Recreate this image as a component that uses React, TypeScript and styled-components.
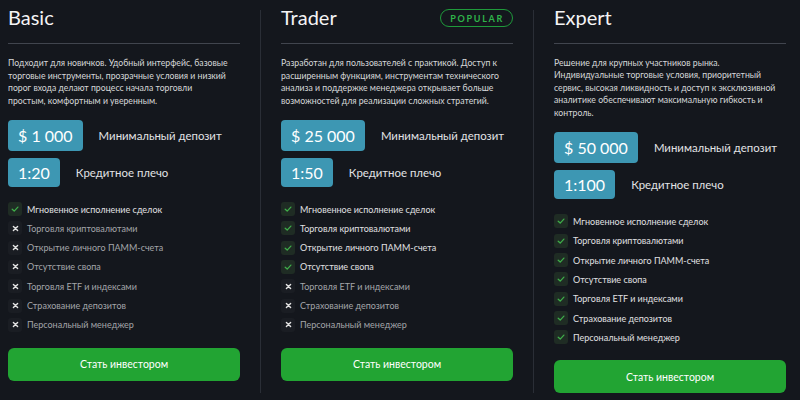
import styled, { createGlobalStyle } from "styled-components";

type Plan = {
  name: string;
  popular?: boolean;
  text: string;
  deposit: string;
  leverage: string;
  included: number;
};

const FEATURES = [
  "Мгновенное исполнение сделок",
  "Торговля криптовалютами",
  "Открытие личного ПАММ-счета",
  "Отсутствие свопа",
  "Торговля ETF и индексами",
  "Страхование депозитов",
  "Персональный менеджер",
];

const PLANS: Plan[] = [
  {
    name: "Basic",
    text: "Подходит для новичков. Удобный интерфейс, базовые торговые инструменты, прозрачные условия и низкий порог входа делают процесс начала торговли\nпростым, комфортным и уверенным.",
    deposit: "$ 1 000",
    leverage: "1:20",
    included: 1,
  },
  {
    name: "Trader",
    popular: true,
    text: "Разработан для пользователей с практикой. Доступ к расширенным функциям, инструментам технического анализа и поддержке менеджера открывает больше возможностей для реализации сложных стратегий.",
    deposit: "$ 25 000",
    leverage: "1:50",
    included: 4,
  },
  {
    name: "Expert",
    text: "Решение для крупных участников рынка. Индивидуальные торговые условия, приоритетный сервис, высокая ликвидность и доступ к эксклюзивной аналитике обеспечивают максимальную гибкость и контроль.",
    deposit: "$ 50 000",
    leverage: "1:100",
    included: 7,
  },
];

const CheckIcon = () => (
  <svg width="8" height="8" viewBox="0 0 10 10" fill="none">
    <path d="M1.5 5.3 L4 7.6 L8.6 2.6" stroke="#3fae4a" strokeWidth="1.6" strokeLinecap="round" strokeLinejoin="round" />
  </svg>
);

const CrossIcon = () => (
  <svg width="7" height="7" viewBox="0 0 10 10" fill="none">
    <path d="M2 2 L8 8 M8 2 L2 8" stroke="#e4e4e4" strokeWidth="2" strokeLinecap="round" />
  </svg>
);

const PlanCard = ({ plan }: { plan: Plan }) => (
  <Column>
    <Header>
      <Title>{plan.name}</Title>
      {plan.popular && <Popular>POPULAR</Popular>}
    </Header>
    <Rule />
    <Description>{plan.text}</Description>
    <Terms>
      <TermRow>
        <Pill $tall>{plan.deposit}</Pill>
        <TermLabel>Минимальный депозит</TermLabel>
      </TermRow>
      <TermRow>
        <Pill>{plan.leverage}</Pill>
        <TermLabel>Кредитное плечо</TermLabel>
      </TermRow>
    </Terms>
    <Features>
      {FEATURES.map((f, i) => {
        const on = i < plan.included;
        return (
          <Feature key={f} $on={on}>
            <Mark $on={on}>{on ? <CheckIcon /> : <CrossIcon />}</Mark>
            {f}
          </Feature>
        );
      })}
    </Features>
    <InvestButton>Стать инвестором</InvestButton>
  </Column>
);

export default function App() {
  return (
    <>
      <GlobalStyle />
      <Page>
        <PlanCard plan={PLANS[0]} />
        <Divider />
        <PlanCard plan={PLANS[1]} />
        <Divider />
        <PlanCard plan={PLANS[2]} />
      </Page>
    </>
  );
}

const GlobalStyle = createGlobalStyle`
  html, body {
    margin: 0;
    background: #14171d;
  }
  body {
    font-family: Lato, "Noto Sans", sans-serif;
    color: #e9e9ea;
  }
`;

const Page = styled.div`
  display: flex;
  align-items: stretch;
  padding: 5px 12px 7px 8px;
  width: 800px;
  height: 400px;
  box-sizing: border-box;
`;

const Divider = styled.div`
  width: 1px;
  margin: 5px 20px 0 20px;
  background: #2a2e36;
  flex: none;
`;

const Column = styled.div`
  width: 232px;
  flex: none;
  display: flex;
  flex-direction: column;
`;

const Header = styled.div`
  display: flex;
  justify-content: space-between;
  align-items: center;
  height: 24px;
`;

const Title = styled.h2`
  margin: 0;
  font-size: 20px;
  line-height: 24px;
  font-weight: 400;
  color: #f4f4f5;
`;

const Popular = styled.span`
  display: flex;
  align-items: center;
  height: 16px;
  padding: 0 8px 0 9px;
  border: 1px solid #1f9a3b;
  border-radius: 10px;
  color: #2fb34a;
  font-size: 9px;
  font-weight: 700;
  letter-spacing: 1.7px;
  margin-top: 2px;
`;

const Rule = styled.div`
  height: 1px;
  background: #41454e;
  margin-top: 14px;
`;

const Description = styled.p`
  margin: 13px 0 0;
  font-size: 8.7px;
  line-height: 12.5px;
  white-space: pre-line;
  color: #d6d7d9;
`;

const Terms = styled.div`
  display: flex;
  flex-direction: column;
  gap: 7px;
  margin-top: 13px;
`;

const TermRow = styled.div`
  display: flex;
  align-items: center;
  gap: 16px;
`;

const Pill = styled.div<{ $tall?: boolean }>`
  flex: none;
  white-space: nowrap;
  height: ${(p) => (p.$tall ? 31 : 29)}px;
  padding: 0 10px;
  display: flex;
  align-items: center;
  background: #3d97b3;
  border-radius: 4px;
  color: #ffffff;
  font-size: 16px;
`;

const TermLabel = styled.span`
  font-size: 11.4px;
  white-space: nowrap;
  color: #e2e3e5;
`;

const Features = styled.ul`
  list-style: none;
  margin: 15px 0 0;
  padding: 0;
  display: flex;
  flex-direction: column;
  gap: 5.33px;
`;

const Feature = styled.li<{ $on: boolean }>`
  display: flex;
  align-items: center;
  gap: 5px;
  height: 14px;
  font-size: 9px;
  color: ${(p) => (p.$on ? "#e0e0e2" : "#a3a5a9")};
`;

const Mark = styled.span<{ $on: boolean }>`
  width: 14px;
  height: 14px;
  border-radius: 3px;
  flex: none;
  display: flex;
  align-items: center;
  justify-content: center;
  background: ${(p) => (p.$on ? "#1f2c24" : "#1a1d23")};
`;

const InvestButton = styled.button`
  margin-top: 16px;
  height: 33px;
  width: 100%;
  border: none;
  border-radius: 6px;
  background: #22a433;
  color: #ffffff;
  font-family: inherit;
  font-size: 10.5px;
  cursor: pointer;
`;
